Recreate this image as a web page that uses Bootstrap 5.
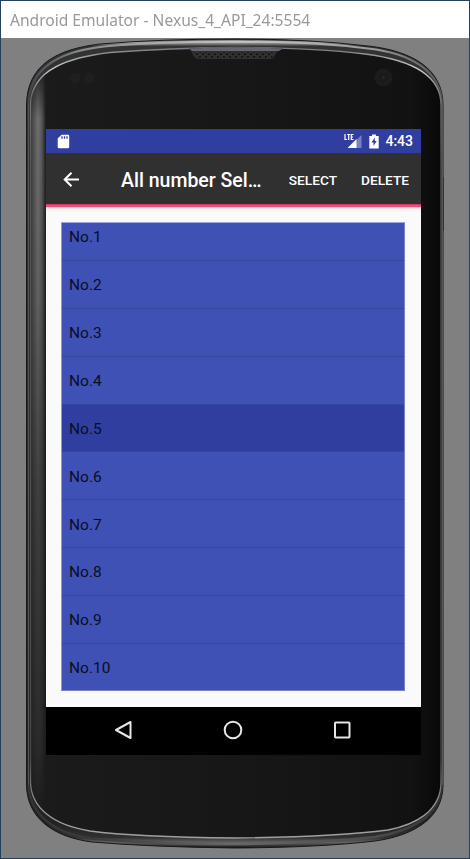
<!DOCTYPE html>
<html lang="en">
<head>
<meta charset="utf-8">
<meta name="viewport" content="width=device-width, initial-scale=1">
<title>Android Emulator - Nexus_4_API_24:5554</title>
<link href="https://cdn.jsdelivr.net/npm/bootstrap@5.3.0/dist/css/bootstrap.min.css" rel="stylesheet">
<style>
body{font-family:Roboto,sans-serif;background:#808080}
.emulator{width:470px;height:859px;border:1px solid #24405f}
.titlebar{height:37px;padding:0 0 0 9px;font:16.3px "Noto Sans","Open Sans",sans-serif;color:#999}
.titlebar span{display:inline-block;transform:scaleX(.957);transform-origin:left;white-space:nowrap}
.stage{background:#808080;padding:91px 48px 0 45px}
.handset{position:absolute;left:-1px;top:-38px;width:470px;height:859px}
.screen{width:375px;height:626px;background:#000}
.statusbar{height:24px;background:#303f9f;font-size:14px;font-weight:500;padding:0 8px 0 11px}
.clock{margin-left:6px}
.signal{margin-right:7px}
.appbar{height:51px;background:#303030;padding:3px 12px 0 17px}
.app-title{font-size:19.5px;font-weight:500;width:142px;margin-left:41px;padding-top:2px}
.act{font-size:13.7px;font-weight:500;line-height:20px}
.accent{height:3px;background:linear-gradient(#b93858,#ff4081 45%,#d85a7c)}
.page{height:500px;background:linear-gradient(#c8c8c8,#eee 2px,#fafafa 5px);padding:15px 16px 0 15px}
.numbers{--bs-list-group-bg:#3f51b5;--bs-list-group-border-color:#36469f;height:469px;border:1px solid #7481cb;border-top-color:#a0a9db;border-left-color:#8f99d5;--bs-list-group-border-radius:0}
.numbers .list-group-item{height:47.85px;flex:none;padding:3px 7px 0;font-size:15.5px;color:#0b0e20;border-width:0 0 1px}
.numbers .list-group-item:first-child{height:38px;padding:0 7px 7px}
.numbers .list-group-item:last-child{height:46.2px;border:0;padding-top:4px}
.numbers .chosen{background:#303f9f}
.softkeys{height:48px;padding:0 69px 2px 67px}
</style>
<script src="https://cdn.jsdelivr.net/npm/bootstrap@5.3.0/dist/js/bootstrap.bundle.min.js"></script>
</head>
<body class="overflow-hidden">
<div class="emulator d-flex flex-column overflow-hidden">
  <header class="titlebar bg-white d-flex align-items-center"><span>Android Emulator - Nexus_4_API_24:5554</span></header>
  <main class="stage position-relative flex-grow-1">
    <svg class="handset" viewBox="0 0 470 859" aria-hidden="true">
      <defs>
        <linearGradient id="rim" x1="0" y1="39" x2="0" y2="848" gradientUnits="userSpaceOnUse">
          <stop offset="0" stop-color="#222"/><stop offset=".004" stop-color="#aaa"/><stop offset=".009" stop-color="#333"/><stop offset=".03" stop-color="#303235"/><stop offset=".97" stop-color="#222"/><stop offset=".987" stop-color="#303030"/><stop offset=".993" stop-color="#626262"/><stop offset="1" stop-color="#151515"/>
        </linearGradient>
        <linearGradient id="face" x1="30" y1="0" x2="440" y2="0" gradientUnits="userSpaceOnUse">
          <stop offset="0" stop-color="#1b1b1b"/><stop offset=".5" stop-color="#171717"/><stop offset=".93" stop-color="#121212"/><stop offset="1" stop-color="#090909"/>
        </linearGradient>
        <linearGradient id="edge" x1="30" y1="0" x2="46" y2="0" gradientUnits="userSpaceOnUse">
          <stop offset="0" stop-color="#383838"/><stop offset=".5" stop-color="#6f6f6f"/><stop offset=".75" stop-color="#555"/><stop offset="1" stop-color="#1b1b1b"/>
        </linearGradient>
        <linearGradient id="fade" x1="0" y1="65" x2="0" y2="820" gradientUnits="userSpaceOnUse">
          <stop offset="0" stop-color="#000"/><stop offset=".07" stop-color="#fff"/><stop offset=".3" stop-color="#ddd"/><stop offset=".55" stop-color="#777"/><stop offset=".9" stop-color="#333"/><stop offset="1" stop-color="#000"/>
        </linearGradient>
        <linearGradient id="line" x1="0" y1="48" x2="0" y2="838" gradientUnits="userSpaceOnUse">
          <stop offset="0" stop-color="#777a80"/><stop offset=".025" stop-color="#c9cccc"/><stop offset=".06" stop-color="#777"/><stop offset=".15" stop-color="#555"/><stop offset=".9" stop-color="#484848"/><stop offset=".96" stop-color="#999"/><stop offset="1" stop-color="#a0a0a0"/>
        </linearGradient>
        <linearGradient id="toplight" x1="28" y1="0" x2="440" y2="0" gradientUnits="userSpaceOnUse"><stop offset="0" stop-color="#444"/><stop offset=".12" stop-color="#888"/><stop offset=".5" stop-color="#c8c8c8"/><stop offset=".85" stop-color="#999"/><stop offset="1" stop-color="#555"/></linearGradient>
        <linearGradient id="lowlight" x1="28" y1="0" x2="441" y2="0" gradientUnits="userSpaceOnUse"><stop offset="0" stop-color="#333"/><stop offset=".15" stop-color="#3a3a3a"/><stop offset=".5" stop-color="#686868"/><stop offset=".85" stop-color="#4a4a4a"/><stop offset="1" stop-color="#333"/></linearGradient>
        <mask id="sidemask"><rect x="20" y="60" width="40" height="770" fill="url(#fade)"/></mask>
        <path id="glass" d="M30.500 105C31 68 72 57 110 52.500Q170 48 235 47.500Q310 47.500 365 54C405 59 441 72 441 105V782C441 812 414 825 388 830Q335 837 235 838Q135 837 90 831C53 825 31 808 30.500 782Z"/>
        <clipPath id="faceclip"><use href="#glass"/></clipPath>
        <pattern id="holes" width="6" height="5" patternUnits="userSpaceOnUse"><path d="M1 1h2v1.500H1zM4 3.500h2V5H4z" fill="#111"/></pattern>
      </defs>
      <path d="M26.500 105C27 64 58 49 100 44Q160 39 235 39Q310 39 368 46C414 51 443 70 443 105V785C443 820 411 836 375 841Q320 847.500 235 848Q150 847 92 842C53 837 27 818 26.500 785Z" fill="url(#rim)" stroke="#181818"/>
      <path d="M28.500 105C29 66 62 51 104 46.500Q160 41.500 235 41.500Q310 41.500 368 48.500C410 53 442 71 442 105" fill="none" stroke="url(#toplight)" stroke-width="2"/>
      <path d="M28.500 785C30 815 55 834 92 838.500Q150 844 235 844Q320 843 375 837C411 831 441 816 442 785" fill="none" stroke="url(#lowlight)" stroke-width="2.500"/>
      <use href="#glass" fill="url(#face)" stroke="url(#line)" stroke-width="1.300"/>
      <g clip-path="url(#faceclip)"><rect x="31" y="60" width="15" height="770" fill="url(#edge)" mask="url(#sidemask)"/></g>
      <path d="M28.500 105V785M442.500 105V785" stroke="#555"/><path d="M443.500 177V231" stroke="#333"/>
      <path d="M189 48.500Q235 46.500 283 48.500Q277 49 274 57Q273 59 269 59H199Q195 59 193 55Q191 50 189 48.500Z" fill="#303030"/>
      <path d="M189 48.500Q235 46.500 283 48.500L279 51H192Z" fill="#66666e"/>
      <path d="M194 52H275L272 58H197Z" fill="url(#holes)"/>
      <circle cx="75" cy="78" r="5.500" fill="#1f1f1f"/><circle cx="89" cy="78" r="5.500" fill="#1f1f1f"/>
      <circle cx="383.500" cy="77.500" r="9" fill="#1c1c1c"/><circle cx="383.500" cy="77.500" r="4.500" fill="#1a1a1d"/><circle cx="383.500" cy="77.500" r="1.300" fill="#25254a"/>
    </svg>
    <section class="screen position-relative d-flex flex-column">
      <div class="statusbar d-flex align-items-center text-white">
        <svg width="13" height="15" viewBox="0 0 13 15"><path d="M4.500 .8H11Q12.200 .8 12.200 2V13Q12.200 14.300 11 14.300H2Q.7 14.300 .7 13V4.600Z" fill="#fff"/><path d="M5 2.200v2.500M7.500 2.200v2.500M10 2.200v2.500" stroke="#303f9f" stroke-width="1.300"/></svg>
        <svg class="signal ms-auto" width="18" height="16" viewBox="0 0 18 16"><path d="M17.500 2V15H4.500Z" fill="#7782c0"/><path d="M12.500 6V15H3.500Z" fill="#fff"/><path d="M0 0H10V7.500H0Z" fill="#303f9f"/><path d="M1 1V6.500H3M3.200 1.500H6.200M4.700 1.500V7M9.500 1.500H7.300V6.500H9.500M7.300 4H9" fill="none" stroke="#fff" stroke-width="1.200"/></svg>
        <svg width="10" height="15" viewBox="0 0 10 15"><path d="M.3 2H3V.5H7V2H9.700V14.500H.3Z" fill="#fff"/><path d="M5.800 3.500L2.500 8.500H4.500V12L7.700 7H5.800Z" fill="#303f9f"/></svg>
        <span class="clock lh-1">4:43</span>
      </div>
      <nav class="appbar d-flex align-items-center text-white">
        <svg width="17" height="16" viewBox="0 0 17 16"><path d="M16 7.500H2M8.500 .8L1.700 7.500L8.500 14.200" fill="none" stroke="#fff" stroke-width="2"/></svg>
        <div class="app-title text-nowrap">All number Sel…</div>
        <span class="act ms-auto">SELECT</span><span class="act ms-4">DELETE</span>
      </nav>
      <div class="accent"></div>
      <div class="page">
        <ul class="numbers list-group overflow-hidden">
          <li class="list-group-item d-flex align-items-center">No.1</li>
          <li class="list-group-item d-flex align-items-center">No.2</li>
          <li class="list-group-item d-flex align-items-center">No.3</li>
          <li class="list-group-item d-flex align-items-center">No.4</li>
          <li class="list-group-item d-flex align-items-center chosen">No.5</li>
          <li class="list-group-item d-flex align-items-center">No.6</li>
          <li class="list-group-item d-flex align-items-center">No.7</li>
          <li class="list-group-item d-flex align-items-center">No.8</li>
          <li class="list-group-item d-flex align-items-center">No.9</li>
          <li class="list-group-item d-flex align-items-center">No.10</li>
        </ul>
      </div>
      <div class="softkeys d-flex align-items-center justify-content-between">
        <svg width="20" height="20" viewBox="0 0 20 20"><path d="M17.500 2V18L3 10Z" fill="none" stroke="#e6e6e6" stroke-width="2" stroke-linejoin="round"/></svg>
        <svg width="20" height="20" viewBox="0 0 20 20"><circle cx="10" cy="10" r="8.300" fill="none" stroke="#e6e6e6" stroke-width="2"/></svg>
        <svg width="20" height="20" viewBox="0 0 20 20"><rect x="3" y="2.500" width="14.500" height="15" rx=".8" fill="none" stroke="#e6e6e6" stroke-width="2"/></svg>
      </div>
    </section>
  </main>
</div>
</body>
</html>
